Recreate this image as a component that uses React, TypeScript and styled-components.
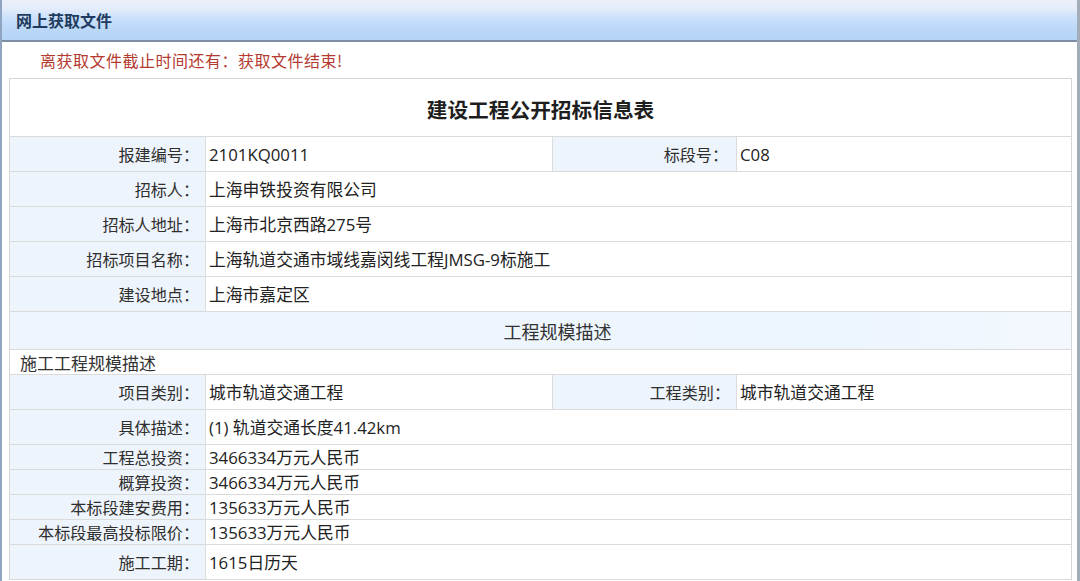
import React from "react";
import styled, { createGlobalStyle } from "styled-components";

const GlobalStyle = createGlobalStyle`
  html, body { margin: 0; padding: 0; background: #fff; }
  body { font-family: "Noto Sans CJK SC", "Noto Sans", sans-serif; color: #333; }
  * { box-sizing: border-box; }
`;

const Panel = styled.div`
  width: 1080px;
  height: 581px;
  overflow: hidden;
  border-left: 2px solid #8fa4c0;
  border-right: 3px solid #a3adb9;
  background: #fff;
`;

const Header = styled.div`
  height: 42px;
  display: flex;
  align-items: center;
  padding-left: 14px;
  background: linear-gradient(to bottom, #eceff9 0%, #e4ecfa 22%, #cfe3fb 40%, #bcd8f8 70%, #b6d4f7 100%);
  border-bottom: 2px solid #7e8ea4;
  font-size: 16px;
  font-weight: 700;
  color: #1f3c60;
`;

const Notice = styled.div`
  height: 36px;
  display: flex;
  align-items: center;
  padding-left: 38px;
  font-size: 16px;
  letter-spacing: 0.5px;
  color: #b53a30;
`;

const Table = styled.div`
  margin: 0 5px 0 7px;
  border: 1px solid #d6d6d6;
  border-bottom: none;
`;

const Row = styled.div<{ $h: number; $cols: "four" | "two" | "one" }>`
  display: grid;
  grid-template-columns: ${(p) =>
    p.$cols === "four" ? "196px 347px 184px 1fr" : p.$cols === "two" ? "196px 1fr" : "1fr"};
  height: ${(p) => p.$h}px;
  border-bottom: 1px solid #dadada;
`;

const Title = styled.div`
  display: flex;
  align-items: center;
  justify-content: center;
  font-size: 20.7px;
  font-weight: 700;
  color: #1e1e1e;
  padding-top: 2px;
`;

const Label = styled.div<{ $pr?: number }>`
  display: flex;
  align-items: center;
  justify-content: flex-end;
  padding-right: ${(p) => p.$pr ?? 6}px;
  background: #eef4fb;
  border-right: 1px solid #dcdcdc;
  font-size: 16.1px;
  color: #2e2e2e;
  white-space: nowrap;
`;

const Value = styled.div<{ $last?: boolean }>`
  display: flex;
  align-items: center;
  padding-left: 3px;
  background: #fff;
  border-right: ${(p) => (p.$last ? "none" : "1px solid #dcdcdc")};
  font-family: "Open Sans", "Noto Sans CJK SC", sans-serif;
  font-size: 16.8px;
  color: #222;
  white-space: nowrap;
`;

const Section = styled.div`
  display: flex;
  align-items: center;
  justify-content: center;
  padding-left: 34px;
  background: linear-gradient(to right, #eef5fd, #edf5fd 80%, #f3f8fe);
  font-size: 18px;
  color: #333;
`;

const Sub = styled.div`
  display: flex;
  align-items: center;
  padding-left: 10px;
  font-size: 17px;
  color: #333;
`;

type Pair = { label: string; value: string; h: number };

const basicRows: Pair[] = [
  { label: "招标人：", value: "上海申铁投资有限公司", h: 35 },
  { label: "招标人地址：", value: "上海市北京西路275号", h: 35 },
  { label: "招标项目名称：", value: "上海轨道交通市域线嘉闵线工程JMSG-9标施工", h: 35 },
  { label: "建设地点：", value: "上海市嘉定区", h: 35 },
];

const scaleRows: Pair[] = [
  { label: "具体描述：", value: "(1) 轨道交通长度41.42km", h: 35 },
  { label: "工程总投资：", value: "3466334万元人民币", h: 25 },
  { label: "概算投资：", value: "3466334万元人民币", h: 25 },
  { label: "本标段建安费用：", value: "135633万元人民币", h: 25 },
  { label: "本标段最高投标限价：", value: "135633万元人民币", h: 25 },
  { label: "施工工期：", value: "1615日历天", h: 35 },
];

function PairRow({ label, value, h }: Pair) {
  return (
    <Row $h={h} $cols="two">
      <Label>{label}</Label>
      <Value $last>{value}</Value>
    </Row>
  );
}

export default function App() {
  return (
    <>
      <GlobalStyle />
      <Panel>
        <Header>网上获取文件</Header>
        <Notice>离获取文件截止时间还有：获取文件结束!</Notice>
        <Table>
          <Row $h={58} $cols="one">
            <Title>建设工程公开招标信息表</Title>
          </Row>
          <Row $h={35} $cols="four">
            <Label>报建编号：</Label>
            <Value>2101KQ0011</Value>
            <Label $pr={8}>标段号：</Label>
            <Value $last>C08</Value>
          </Row>
          {basicRows.map((r) => (
            <PairRow key={r.label} {...r} />
          ))}
          <Row $h={38} $cols="one">
            <Section>工程规模描述</Section>
          </Row>
          <Row $h={25} $cols="one">
            <Sub>施工工程规模描述</Sub>
          </Row>
          <Row $h={35} $cols="four">
            <Label>项目类别：</Label>
            <Value>城市轨道交通工程</Value>
            <Label>工程类别：</Label>
            <Value $last>城市轨道交通工程</Value>
          </Row>
          {scaleRows.map((r) => (
            <PairRow key={r.label} {...r} />
          ))}
        </Table>
      </Panel>
    </>
  );
}
